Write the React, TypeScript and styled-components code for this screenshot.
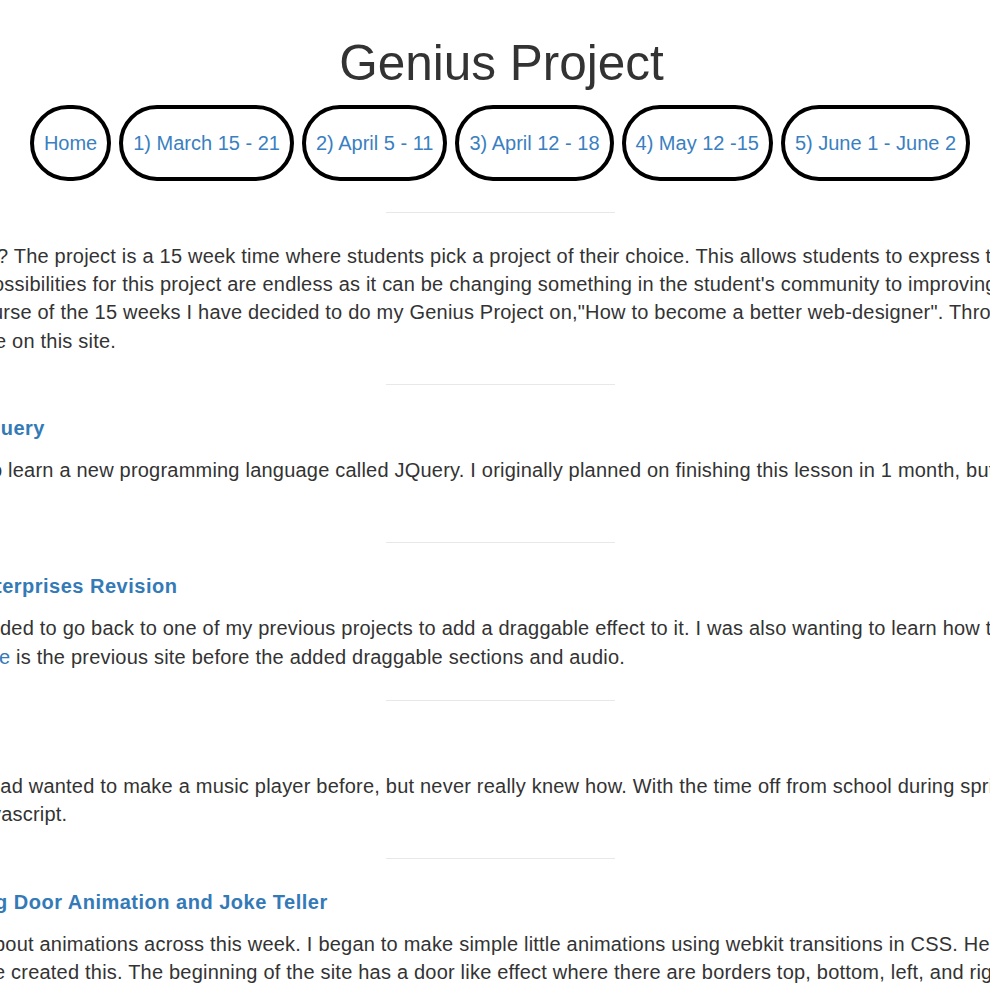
import React from "react";
import styled, { createGlobalStyle } from "styled-components";

const GlobalStyle = createGlobalStyle`
  html, body {
    margin: 0;
    padding: 0;
    background: #ffffff;
  }
  body {
    font-family: "Liberation Sans", Arial, sans-serif;
    color: #333333;
  }
`;

const Page = styled.div`
  width: 1000px;
  overflow: hidden;
`;

const Header = styled.header`
  display: flex;
  flex-direction: column;
  align-items: center;
  padding-top: 35px;
  padding-bottom: 2px;
`;

const Title = styled.h1`
  margin: 0 0 0 3px;
  font-size: 49.5px;
  line-height: 56px;
  font-weight: 400;
  color: #333333;
`;

const Nav = styled.nav`
  display: flex;
  justify-content: center;
  gap: 8px;
  margin-top: 14px;
`;

const Pill = styled.a`
  box-sizing: border-box;
  height: 76px;
  display: flex;
  align-items: center;
  padding: 0 10px;
  border: 4px solid #000000;
  border-radius: 40px;
  font-size: 20px;
  color: #3a7fc1;
  text-decoration: none;
  white-space: nowrap;
`;

const Content = styled.main`
  width: 1000px;
  overflow: hidden;
`;

const Divider = styled.hr`
  width: 229px;
  margin: 28.7px auto 29px;
  border: 0;
  border-top: 1px solid #e8e8e8;
  height: 0;
`;

const Section = styled.section`
  display: block;
`;

const Heading = styled.h4<{ $shift: number }>`
  margin: 0 0 14px ${(p) => p.$shift}px;
  height: 28.4px;
  font-size: 20px;
  line-height: 28.4px;
  font-weight: 700;
  letter-spacing: 0.5px;
  color: #337ab7;
  white-space: nowrap;
`;

const Paragraph = styled.div`
  width: 990px;
  overflow: hidden;
`;

const Line = styled.p<{ $shift: number }>`
  margin: 0 0 0 ${(p) => p.$shift}px;
  height: 28.4px;
  font-size: 20px;
  line-height: 28.4px;
  letter-spacing: 0.21px;
  color: #333333;
  white-space: nowrap;
`;

const Link = styled.a`
  color: #337ab7;
  text-decoration: none;
`;

type LineData = { shift: number; content: React.ReactNode };
type SectionData = { heading?: { shift: number; text: string }; lines: LineData[] };

const navItems = [
  "Home",
  "1) March 15 - 21",
  "2) April 5 - 11",
  "3) April 12 - 18",
  "4) May 12 -15",
  "5) June 1 - June 2",
];

const sections: SectionData[] = [
  {
    lines: [
      {
        shift: -3,
        content:
          "? The project is a 15 week time where students pick a project of their choice. This allows students to express their",
      },
      {
        shift: -7,
        content:
          "ossibilities for this project are endless as it can be changing something in the student's community to improving",
      },
      {
        shift: -8,
        content:
          'urse of the 15 weeks I have decided to do my Genius Project on,"How to become a better web-designer". Throughout',
      },
      { shift: -5, content: "e on this site." },
    ],
  },
  {
    heading: { shift: -12, text: "query" },
    lines: [
      {
        shift: -9,
        content:
          "o learn a new programming language called JQuery. I originally planned on finishing this lesson in 1 month, but",
      },
      { shift: 0, content: "" },
    ],
  },
  {
    heading: { shift: -5, text: "terprises Revision" },
    lines: [
      {
        shift: 0,
        content:
          "ded to go back to one of my previous projects to add a draggable effect to it. I was also wanting to learn how to",
      },
      {
        shift: -1,
        content: (
          <>
            <Link href="#">e</Link> is the previous site before the added draggable sections and audio.
          </>
        ),
      },
    ],
  },
  {
    heading: { shift: 0, text: "" },
    lines: [
      {
        shift: -11,
        content:
          "had wanted to make a music player before, but never really knew how. With the time off from school during spring",
      },
      { shift: -9, content: "vascript." },
    ],
  },
  {
    heading: { shift: -5, text: "g Door Animation and Joke Teller" },
    lines: [
      {
        shift: -6,
        content:
          "bout animations across this week. I began to make simple little animations using webkit transitions in CSS. Here",
      },
      {
        shift: -6,
        content:
          "e created this. The beginning of the site has a door like effect where there are borders top, bottom, left, and right",
      },
    ],
  },
];

export default function App() {
  return (
    <Page>
      <GlobalStyle />
      <Header>
        <Title>Genius Project</Title>
        <Nav>
          {navItems.map((item) => (
            <Pill key={item} href="#">
              {item}
            </Pill>
          ))}
        </Nav>
      </Header>
      <Content>
        {sections.map((s, i) => (
          <Section key={i}>
            <Divider />
            {s.heading && <Heading $shift={s.heading.shift}>{s.heading.text}</Heading>}
            <Paragraph>
              {s.lines.map((l, j) => (
                <Line key={j} $shift={l.shift}>
                  {l.content}
                </Line>
              ))}
            </Paragraph>
          </Section>
        ))}
      </Content>
    </Page>
  );
}
